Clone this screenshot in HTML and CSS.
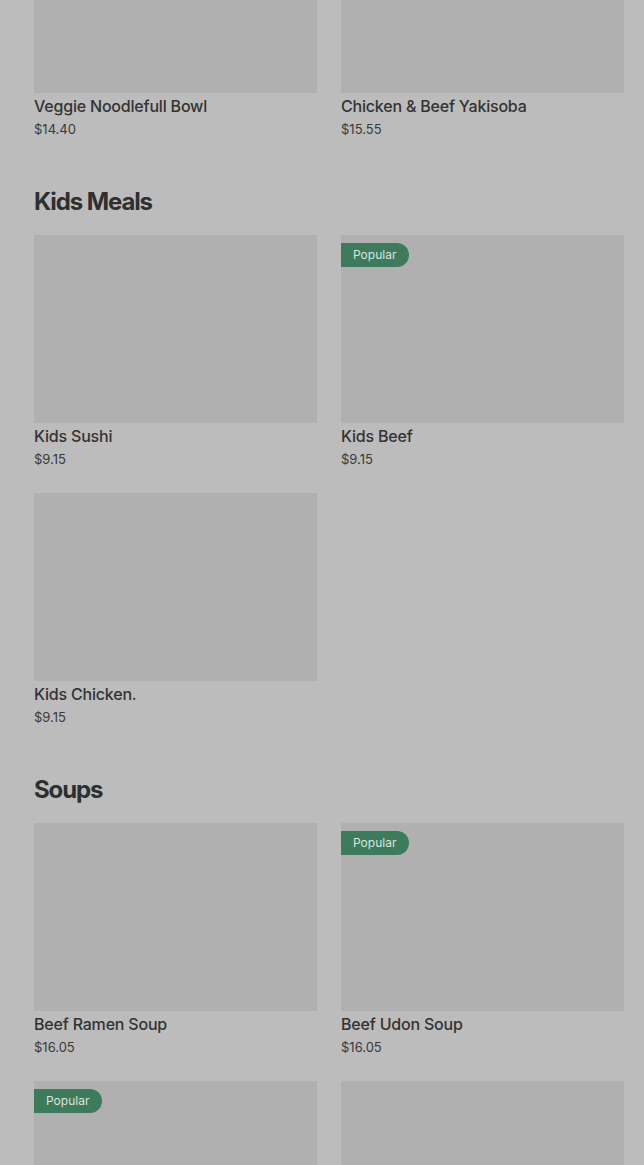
FILE: index.html
```html
<!DOCTYPE html>
<html>
<head>
<meta charset="utf-8">
<link rel="stylesheet" href="styles.css">
</head>
<body>
<main class="menu">
  <section class="section first">
    <div class="grid">
      <div class="card"><div class="thumb"></div><div class="name">Veggie Noodlefull Bowl</div><div class="price">$14.40</div></div>
      <div class="card"><div class="thumb"></div><div class="name">Chicken &amp; Beef Yakisoba</div><div class="price">$15.55</div></div>
    </div>
  </section>
  <section class="section">
    <h2 class="heading">Kids Meals</h2>
    <div class="grid">
      <div class="card"><div class="thumb"></div><div class="name">Kids Sushi</div><div class="price">$9.15</div></div>
      <div class="card"><div class="thumb"><span class="badge">Popular</span></div><div class="name">Kids Beef</div><div class="price">$9.15</div></div>
      <div class="card"><div class="thumb"></div><div class="name">Kids Chicken.</div><div class="price">$9.15</div></div>
    </div>
  </section>
  <section class="section">
    <h2 class="heading">Soups</h2>
    <div class="grid">
      <div class="card"><div class="thumb"></div><div class="name">Beef Ramen Soup</div><div class="price">$16.05</div></div>
      <div class="card"><div class="thumb"><span class="badge">Popular</span></div><div class="name">Beef Udon Soup</div><div class="price">$16.05</div></div>
      <div class="card"><div class="thumb"><span class="badge">Popular</span></div></div>
      <div class="card"><div class="thumb"></div></div>
    </div>
  </section>
</main>
</body>
</html>
```
FILE: styles.css
```css
html, body {
  margin: 0;
  padding: 0;
  background: #bcbcbc;
  overflow: hidden;
}
body {
  font-family: Inter, "Noto Sans", "Liberation Sans", sans-serif;
  color: #333333;
}
.menu {
  margin-top: -95px;
  padding: 0 20px 0 34px;
  display: flex;
  flex-direction: column;
  gap: 47px;
}
.heading {
  margin: 0 0 17px 0;
  font-size: 24px;
  line-height: 32px;
  font-weight: 700;
  letter-spacing: -1.1px;
  color: #2f2f2f;
}
.grid {
  display: grid;
  grid-template-columns: 1fr 1fr;
  column-gap: 24px;
  row-gap: 24px;
}
.card {
  display: flex;
  flex-direction: column;
}
.thumb {
  position: relative;
  height: 188px;
  background: #b0b0b0;
  margin-bottom: 3px;
}
.badge {
  position: absolute;
  top: 8px;
  left: 0;
  height: 24px;
  padding: 0 13px 0 12px;
  border-radius: 0 12px 12px 0;
  background: #3d7b5c;
  color: #d9e4de;
  font-size: 12px;
  line-height: 24px;
}
.name {
  font-size: 16px;
  line-height: 20px;
  font-weight: 500;
  letter-spacing: -0.2px;
  color: #333333;
}
.price {
  font-size: 13px;
  line-height: 20px;
  margin-top: 3px;
  color: #3a3a3a;
}
```
